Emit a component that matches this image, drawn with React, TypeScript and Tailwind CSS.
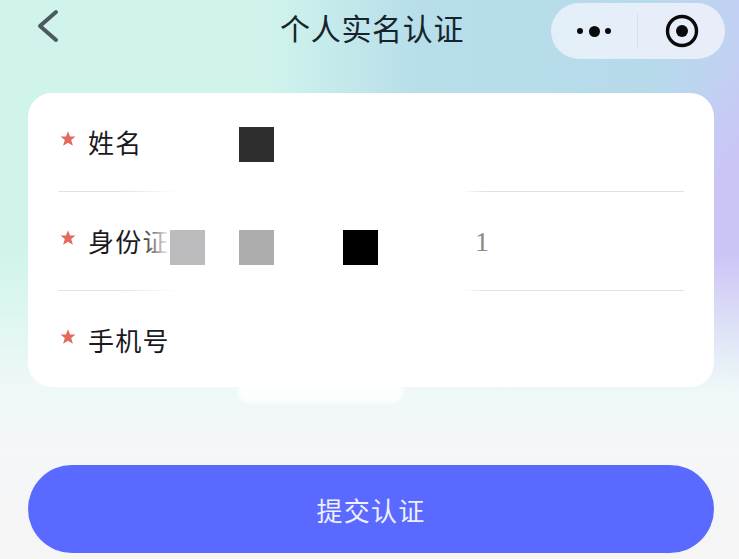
const font = { fontFamily: '"Noto Sans CJK SC", sans-serif' };

function Star() {
  return (
    <svg width="16" height="16" viewBox="0 0 14 14" className="shrink-0">
      <path d="M7 .3 8.8 4.8l4.8.1-3.8 3 1.5 5L7 10.2l-4.3 2.7 1.5-5-3.8-3 4.8-.1Z" fill="#e4695c" />
    </svg>
  );
}

function Divider() {
  return (
    <div className="flex h-px w-full shrink-0">
      <div className="h-px w-[122px] bg-gradient-to-r from-[#e2e2e2] via-[#e2e2e2] to-white" />
      <div className="h-px w-[282px] bg-white" />
      <div className="h-px flex-1 bg-gradient-to-r from-white to-[#e2e2e2] to-[10%]" />
    </div>
  );
}

function Row({ label, children }: { label: string; children?: React.ReactNode }) {
  return (
    <div className="relative flex h-[98px] shrink-0 items-center">
      <div className="mb-[6px] ml-[2px] mr-[12px]"><Star /></div>
      <span className="text-[26px] leading-none tracking-[1.2px] text-[#1a1a1e]">{label}</span>
      {children}
    </div>
  );
}

export default function App() {
  return (
    <div
      style={font}
      className="relative flex h-[559px] w-[739px] flex-col overflow-hidden bg-[linear-gradient(180deg,transparent_0%,transparent_45%,#eff8f8_70%,#f5f6f7_82%,#f5f5f6_100%),radial-gradient(ellipse_130px_190px_at_770px_240px,#cbc4f6_0%,#cbc4f6_45%,transparent_100%),linear-gradient(90deg,#d0f4ec_0%,#d0f4ec_36%,#b8deea_56%,#b6daea_88%,#c2d0f3_100%)]"
    >
      <header className="relative flex h-[93px] shrink-0 items-start">
        <svg width="24" height="36" viewBox="0 0 24 36" className="ml-[36px] mt-[9px]">
          <path d="M20 3 4 17l16 14" fill="none" stroke="#4c5a60" strokeWidth="4" strokeLinecap="round" strokeLinejoin="round" />
        </svg>
        <h1 className="ml-[220px] mt-[6px] text-[30px] font-normal leading-[42px] tracking-[0.7px] text-[#16242c]">个人实名认证</h1>
        <div className="absolute left-[551px] top-[3px] flex h-[56px] w-[174px] items-center rounded-full bg-gradient-to-r from-[#e3eff8] to-[#e9edf9]">
          <div className="ml-[26px] flex w-[34px] items-center justify-between">
            <span className="h-[6px] w-[6px] rounded-full bg-[#0a0a0a]" />
            <span className="h-[11px] w-[11px] rounded-full bg-[#0a0a0a]" />
            <span className="h-[6px] w-[6px] rounded-full bg-[#0a0a0a]" />
          </div>
          <div className="ml-[26px] h-[34px] w-px bg-[#d6e0e8]" />
          <svg width="34" height="34" viewBox="0 0 34 34" className="ml-[27px]">
            <circle cx="17" cy="17" r="14.5" fill="none" stroke="#0a0a0a" strokeWidth="3.4" />
            <circle cx="17" cy="17" r="6" fill="#0a0a0a" />
          </svg>
        </div>
      </header>

      <main className="ml-[28px] mr-[25px] flex h-[294px] shrink-0 flex-col rounded-[24px] bg-white px-[30px]">
        <Row label="姓名">
          <div className="absolute left-[181px] top-[34px] h-[35px] w-[35px] bg-[#2e2e2e]" />
        </Row>
        <Divider />
        <Row label="身份证">
          <div className="absolute left-[82px] top-[38px] h-[35px] w-[30px] bg-gradient-to-r from-white/0 to-white" />
          <div className="absolute left-[112px] top-[38px] h-[35px] w-[35px] bg-[#bcbcbf]" />
          <div className="absolute left-[181px] top-[38px] h-[35px] w-[35px] bg-[#adadad]" />
          <div className="absolute left-[285px] top-[38px] h-[35px] w-[35px] bg-black" />
          <span className="absolute left-[417px] top-[31px] text-[28px] leading-[38px] text-[#8a8a8a]" style={{ fontFamily: '"Liberation Serif", serif' }}>1</span>
        </Row>
        <Divider />
        <Row label="手机号" />
      </main>

      <div className="absolute left-[238px] top-[380px] h-[23px] w-[165px] rounded-[10px] bg-white/80 blur-[2px]" />

      <button className="ml-[28px] mr-[25px] mt-[78px] h-[88px] shrink-0 rounded-full bg-[#5a69ff] text-[26px] tracking-[1.3px] text-[#eef0ff]">
        提交认证
      </button>
    </div>
  );
}
